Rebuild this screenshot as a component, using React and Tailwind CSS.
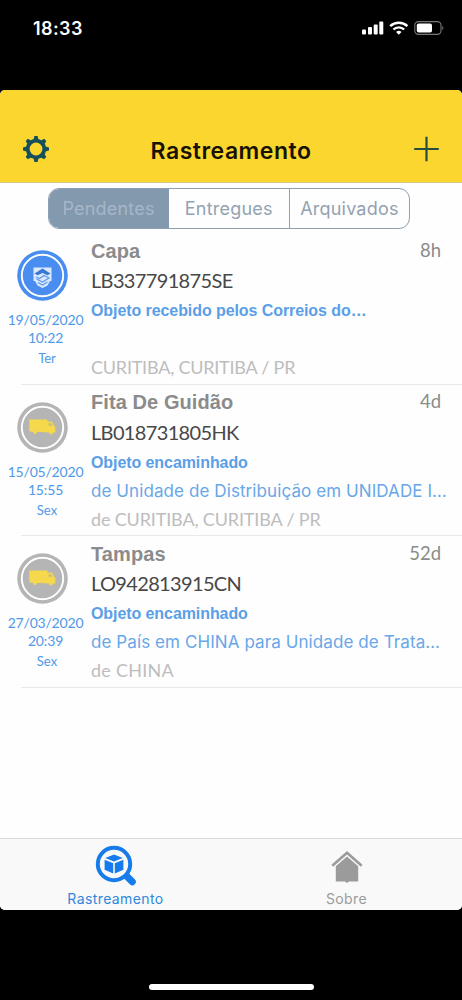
const items = [
  {
    title: 'Capa',
    code: 'LB337791875SE',
    status: 'Objeto recebido pelos Correios do…',
    detail: '',
    location: 'CURITIBA, CURITIBA / PR',
    locationClass: 'tracking-[-0.22px]',
    date: '19/05/2020',
    time: '10:22',
    day: 'Ter',
    age: '8h',
    received: true,
  },
  {
    title: 'Fita De Guidão',
    code: 'LB018731805HK',
    status: 'Objeto encaminhado',
    detail: 'de Unidade de Distribuição em UNIDADE I…',
    location: 'de CURITIBA, CURITIBA / PR',
    locationClass: 'tracking-[-0.15px]',
    date: '15/05/2020',
    time: '15:55',
    day: 'Sex',
    age: '4d',
  },
  {
    title: 'Tampas',
    code: 'LO942813915CN',
    status: 'Objeto encaminhado',
    detail: 'de País em CHINA para Unidade de Trata…',
    location: 'de CHINA',
    locationClass: 'tracking-[0.25px]',
    date: '27/03/2020',
    time: '20:39',
    day: 'Sex',
    age: '52d',
  },
];

const GearIcon = () => (
  <svg className="h-[26px] w-[26px]" viewBox="0 0 26 26" fill="none">
    <circle cx="13" cy="13" r="8.3" stroke="#15505c" strokeWidth="3.8" />
    {[0, 45, 90, 135, 180, 225, 270, 315].map((angle) => (
      <path key={angle} d="M10.3 4.500 11.4 0h3.200l1.100 4.500z" fill="#15505c" transform={`rotate(${angle} 13 13)`} />
    ))}
  </svg>
);

const StatusIcons = () => (
  <svg className="h-[16px] w-[82px]" viewBox="0 0 82 16" fill="none">
    <rect x="0" y="9.5" width="4" height="5" rx="1" fill="#fff" />
    <rect x="6" y="7" width="4" height="7.5" rx="1" fill="#fff" />
    <rect x="11.7" y="4.5" width="4" height="10" rx="1" fill="#fff" />
    <rect x="17.3" y="1.5" width="4" height="13" rx="1" fill="#fff" />
    <path d="M28.2 6.1a12.6 12.6 0 0 1 17.2 0" stroke="#fff" strokeWidth="2.5" />
    <path d="M31.4 9.5a7.8 7.8 0 0 1 10.8 0" stroke="#fff" strokeWidth="2.4" />
    <path d="m36.8 14.7-2.7-2.8a4 4 0 0 1 5.4 0z" fill="#fff" />
    <rect x="52.8" y="1.6" width="26.2" height="12.8" rx="3.6" stroke="#777" strokeWidth="1.1" />
    <rect x="54.8" y="3.5" width="15.2" height="9" rx="1.8" fill="#fff" />
    <path d="M80.3 6v4c1.5-.5 1.5-3.5 0-4" fill="#777" />
  </svg>
);

const ReceivedIcon = () => (
  <svg className="h-[51px] w-[51px]" viewBox="0 0 51 51" fill="none">
    <circle cx="25.5" cy="25.5" r="25.3" fill="#4a8df0" />
    <circle cx="25.5" cy="25.5" r="20.7" stroke="#fff" strokeWidth="1.9" />
    <path d="M16.5 17.5h18v13.500h-1.500l-2.500 4.500-5 2.500-5-2.500-2.500-4.500h-1.500z" fill="#dce9fd" />
    <path d="m17.500 23.500 8-5 8 5-3 1.800-5-2.300-5 2.300z" fill="#3978d3" />
    <path d="m19 27 3.500 1.500 4.500-3 5 2.500-6.500 4-6-3m1.500 3.500 4.500 2.500 5-3" stroke="#5a98f2" strokeWidth="1.2" />
  </svg>
);

const TruckIcon = () => (
  <svg className="h-[51px] w-[51px]" viewBox="0 0 51 51" fill="none">
    <circle cx="25.5" cy="25.5" r="25.3" fill="#b5b5b5" />
    <circle cx="25.5" cy="25.5" r="20.7" stroke="#fff" strokeWidth="1.9" />
    <path d="M12.3 17.5h18v2h4.500l2.500 4.500 1 1v5.500h-6l-19-1h-1z" fill="#f6d84c" />
    <path d="M31.5 21.2h2.600l1.500 2.600h-4.100z" fill="#c9bd7c" />
    <circle cx="18" cy="30" r="1.900" fill="#f6d84c" />
    <circle cx="34" cy="30.500" r="1.900" fill="#f6d84c" />
  </svg>
);

const TrackIcon = () => (
  <svg className="h-[42px] w-[42px]" viewBox="0 0 42 42" fill="none">
    <path d="m30 29.500 7.300 7.300" stroke="#177ceb" strokeWidth="7" strokeLinecap="round" />
    <circle cx="19" cy="19" r="16.200" fill="#f9f9f9" stroke="#177ceb" strokeWidth="4" />
    <path d="m19 9.500 8.800 3.400-8.800 3.700-8.800-3.700z" fill="#177ceb" />
    <path d="m9.600 14.700 8.600 3.500v10.300l-8.600-3.800zM28.400 14.700l-8.600 3.500v10.300l8.600-3.800z" fill="#177ceb" />
  </svg>
);

const HomeIcon = () => (
  <svg className="h-[32px] w-[32px]" viewBox="0 0 32 32" fill="none">
    <path d="M1.300 14.800 16 1.800l14.700 13" stroke="#9b9b9b" strokeWidth="2.600" />
    <path d="M4.800 15.200 16 5.600l11.200 9.600v15.200h-9.200l-2 1.600-2-1.600h-9.200z" fill="#9b9b9b" />
  </svg>
);

const TrackingRow = ({ item }) => (
  <li className="flex h-[151.5px] border-b border-transparent">
    <div className="flex w-[91px] shrink-0 flex-col items-center whitespace-nowrap pt-[17px] font-[Lato,sans-serif] text-[14px] text-[#4f99e8]">
      <div className="mr-[6px]">{item.received ? <ReceivedIcon /> : <TruckIcon />}</div>
      <span className="mt-[10px] h-[18px] text-[14px] leading-[18px] tracking-[-0.2px]">{item.date}</span>
      <span className="h-[19px] leading-[18px] tracking-[-0.15px]">{item.time}</span>
      <span className="mr-[-3px] text-[13px] leading-[20px]">{item.day}</span>
    </div>
    <div className="min-w-0 flex-1 whitespace-nowrap pt-[3px]">
      <div className="flex h-[29px] items-center justify-between pr-[21px] text-[#8b8b8b]">
        <span className="font-['Liberation_Sans',sans-serif] text-[20px] font-bold tracking-[0.08px]">{item.title}</span>
        <span className="font-[Lato,sans-serif] text-[18.5px]">{item.age}</span>
      </div>
      <div className="h-[30px] font-[Lato,sans-serif] text-[20px] leading-[30px] tracking-[-0.65px] text-[#484848]">
        {item.code}
      </div>
      <div className="h-[31px] font-['Liberation_Sans',sans-serif] text-[16px] font-bold leading-[31px] tracking-[-0.08px] text-[#5a9fe8]">
        {item.status}
      </div>
      <div className="h-[27px] font-[Inter,sans-serif] text-[17px] leading-[27px] tracking-[0.09px] text-[#68a7e8]">
        {item.detail}
      </div>
      <div className={`h-[28px] font-[Lato,sans-serif] text-[18px] leading-[28px] text-[#bdbdbd] ${item.locationClass}`}>
        {item.location}
      </div>
    </div>
  </li>
);

const App = () => {
  return (
    <div className="flex h-[1000px] w-[462px] flex-col overflow-hidden bg-black font-[Inter,sans-serif]">
      <div className="flex h-[90px] items-start justify-between pl-[33px] pr-[18px] pt-[20px] text-white">
        <span className="text-[18px] font-semibold leading-[18px] tracking-[0.4px]">18:33</span>
        <StatusIcons />
      </div>

      <div className="flex h-[820px] flex-col overflow-hidden rounded-[5px] bg-[#fefefe]">
        <header className="flex h-[93px] shrink-0 items-end justify-between border-b border-[#d5c78a] bg-[#fad62f] pb-[20px] pl-[23px] pr-[23px]">
          <GearIcon />
          <h1 className="text-[23px] font-semibold leading-[22px] tracking-[0.5px] text-[#171204]">Rastreamento</h1>
          <svg className="h-[26px] w-[26px]" viewBox="0 0 26 26" fill="none">
            <path d="M13.500 .7v24.600M1.200 13h24.600" stroke="#244f40" strokeWidth="2.200" />
          </svg>
        </header>

        <div className="ml-[47.5px] mt-[5px] grid h-[41px] w-[362.5px] shrink-0 grid-cols-3 overflow-hidden rounded-[11px] border-[1.5px] border-[#8d9fb1] text-center text-[18px] leading-[40px] tracking-[0.2px] text-[#93a2b1]">
          <span className="bg-[#8399ad] text-[#a5b7c8]">Pendentes</span>
          <span>Entregues</span>
          <span className="border-l-[1.5px] border-[#8d9fb1]">Arquivados</span>
        </div>

        <ul className="mt-[4px] flex-1">
          {items.map((item) => (
            <div key={item.code}>
              <TrackingRow item={item} />
              <div className="ml-[21px] mt-[-1px] h-px bg-[#e9e9e9]" />
            </div>
          ))}
        </ul>

        <nav className="grid h-[72px] shrink-0 grid-cols-2 border-t border-[#dcdcdc] bg-[#f9f9f9] text-[14px] tracking-[0.4px]">
          <div className="flex flex-col items-center pt-[6px] text-[#3187dc]">
            <TrackIcon />
            <span className="mt-px leading-[21px]">Rastreamento</span>
          </div>
          <div className="flex flex-col items-center pt-[12px] text-[#9b9b9b]">
            <HomeIcon />
            <span className="mt-[5px] leading-[21px]">Sobre</span>
          </div>
        </nav>
      </div>

      <div className="mx-auto mt-[74px] h-[6px] w-[165px] shrink-0 rounded-full bg-white" />
    </div>
  );
};

export default App;
